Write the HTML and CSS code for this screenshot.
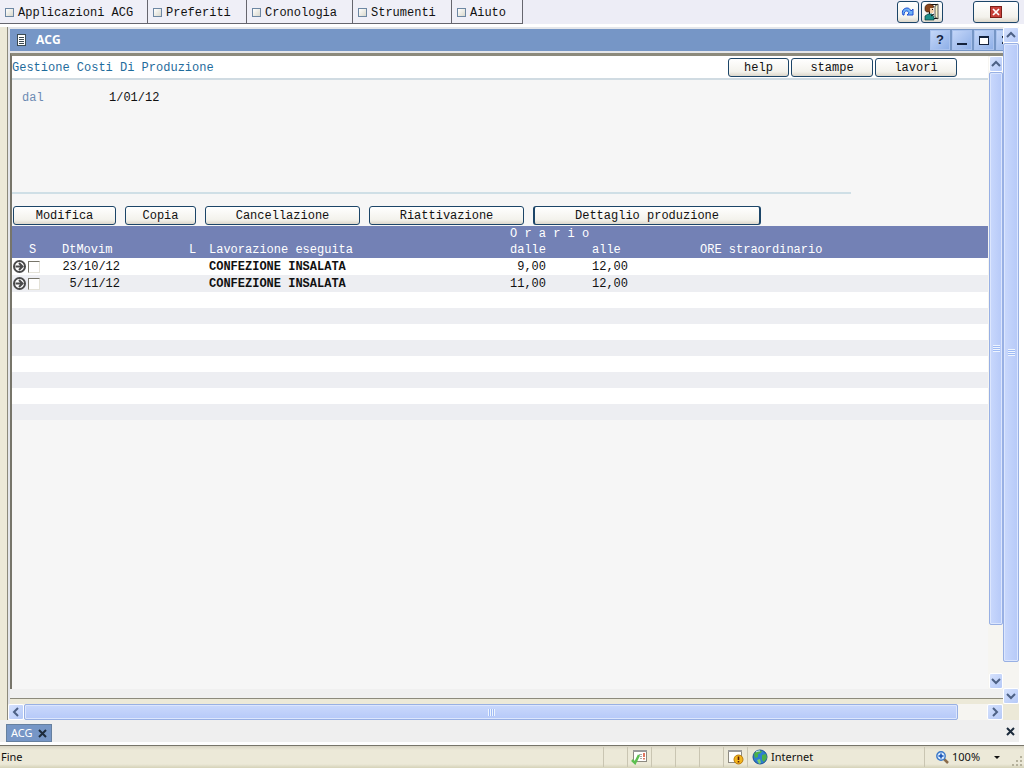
FILE: index.html
```html
<!DOCTYPE html>
<html lang="it">
<head>
    <meta charset="UTF-8">
    <meta name="viewport" content="width=device-width, initial-scale=1.0">
    <title>ACG - Gestione Costi Di Produzione</title>
    <link rel="stylesheet" href="styles.css">
</head>
<body>
    <!-- Menu bar -->
    <header class="menubar">
        <nav class="menu">
            <button type="button" class="menu-item menu-apps"><span class="menu-box"></span>Applicazioni ACG</button>
            <button type="button" class="menu-item menu-fav"><span class="menu-box"></span>Preferiti</button>
            <button type="button" class="menu-item menu-history"><span class="menu-box"></span>Cronologia</button>
            <button type="button" class="menu-item menu-tools"><span class="menu-box"></span>Strumenti</button>
            <button type="button" class="menu-item menu-help"><span class="menu-box"></span>Aiuto</button>
        </nav>
        <div class="menubar-actions">
            <button type="button" class="xp-button icon-button" aria-label="Aggiorna">
                <svg width="14" height="12" viewBox="0 0 14 12">
                    <path d="M2 9 C0 5 3 2 6 2 C8 2 9 3 10 5 L12 3 V9 H6 L8 7 C7 4 3 4 3 9 Z" fill="#6fb2f5" stroke="#1c4fd4"/>
                </svg>
            </button>
            <button type="button" class="xp-button icon-button" aria-label="Esci">
                <svg width="16" height="18" viewBox="0 0 16 18">
                    <rect x="5.5" y="1.5" width="8" height="14" fill="#fff" stroke="#111"/>
                    <path d="M11 3 L14 1 V16 L11 14 Z" fill="#f8f2cc" stroke="#111" stroke-width=".7"/>
                    <path d="M1 5 C1 0 9 0 10 4 L8 5 V9 H4 C1 9 1 7 1 5 Z" fill="#8a451b" stroke="#3b1c0a" stroke-width=".7"/>
                    <path d="M6 5 H9 L10 8 L9 10 H6 Z" fill="#f2cfa8"/>
                    <path d="M8 6 H9 V7 H8 Z" fill="#111"/>
                    <path d="M1 17 V13 L4 11 H8 L10 14 V17 Z" fill="#1d8f88" stroke="#0a3b3a" stroke-width=".7"/>
                    <path d="M7 13 L10 11" stroke="#111"/>
                </svg>
            </button>
            <button type="button" class="xp-button close-button" aria-label="Chiudi">
                <svg width="12" height="12" viewBox="0 0 12 12">
                    <rect x=".5" y=".5" width="11" height="11" fill="#c8413a" stroke="#7e2019"/>
                    <path d="M3 3 L9 9 M9 3 L3 9" stroke="#fff" stroke-width="1.7"/>
                </svg>
            </button>
        </div>
    </header>

    <!-- Desktop with the application window -->
    <div class="desktop">
        <div class="desktop-main">
            <main class="window">
                <div class="titlebar">
                    <svg class="title-icon" width="9" height="12" viewBox="0 0 9 12">
                        <rect x=".5" y=".5" width="8" height="11" fill="#fff" stroke="#3c4b52"/>
                        <path d="M2 3.5 H7 M2 5.5 H7 M2 7.5 H7 M2 9.5 H7" stroke="#3c4b52"/>
                    </svg>
                    <h1 class="title">ACG</h1>
                    <div class="title-buttons">
                        <button type="button" class="title-button">?</button>
                        <button type="button" class="title-button" aria-label="Riduci">
                            <svg width="12" height="12" viewBox="0 0 12 12"><path d="M1 10 H11" stroke="#14223c" stroke-width="2"/></svg>
                        </button>
                        <button type="button" class="title-button" aria-label="Ingrandisci">
                            <svg width="12" height="12" viewBox="0 0 12 12">
                                <rect x="1.5" y="2.5" width="9" height="8" fill="#fff" stroke="#14223c"/>
                                <path d="M1 3 H11" stroke="#14223c" stroke-width="2"/>
                            </svg>
                        </button>
                        <button type="button" class="title-button" aria-label="Chiudi finestra">
                            <svg width="8" height="8" viewBox="0 0 8 8"><path d="M0 0 L8 8 M8 0 L0 8" stroke="#14223c" stroke-width="2"/></svg>
                        </button>
                    </div>
                </div>

                <div class="frame">
                    <div class="page">
                        <div class="page-header">
                            <h2 class="page-title">Gestione Costi Di Produzione</h2>
                            <div class="page-links">
                                <button type="button" class="xp-button link-help">help</button>
                                <button type="button" class="xp-button link-wide">stampe</button>
                                <button type="button" class="xp-button link-wide">lavori</button>
                            </div>
                        </div>

                        <dl class="filter">
                            <dt>dal</dt>
                            <dd>1/01/12</dd>
                        </dl>

                        <div class="toolbar">
                            <button type="button" class="xp-button tool-edit">Modifica</button>
                            <button type="button" class="xp-button tool-copy">Copia</button>
                            <button type="button" class="xp-button tool-wide">Cancellazione</button>
                            <button type="button" class="xp-button tool-wide">Riattivazione</button>
                            <button type="button" class="xp-button tool-detail">Dettaglio produzione</button>
                        </div>

                        <table class="grid">
                            <colgroup>
                                <col class="col-select">
                                <col class="col-date">
                                <col class="col-l">
                                <col class="col-work">
                                <col class="col-from">
                                <col class="col-to">
                                <col>
                            </colgroup>
                            <thead>
                                <tr>
                                    <th colspan="4"></th>
                                    <th colspan="2">O r a r i o</th>
                                    <th></th>
                                </tr>
                                <tr>
                                    <th class="head-select">S</th>
                                    <th>DtMovim</th>
                                    <th>L</th>
                                    <th>Lavorazione eseguita</th>
                                    <th>dalle</th>
                                    <th>alle</th>
                                    <th>ORE straordinario</th>
                                </tr>
                            </thead>
                            <tbody>
                                <tr class="filled">
                                    <td>
                                        <div class="select-cell">
                                            <button type="button" class="row-go" aria-label="Apri riga 1">
                                                <svg width="13" height="13" viewBox="0 0 13 13">
                                                    <circle cx="6.5" cy="6.5" r="5.5" fill="#fff" stroke="#4a4a4a" stroke-width="2"/>
                                                    <path d="M2.5 6.5 H9.5 M6 3 L9.5 6.5 L6 10" fill="none" stroke="#4a4a4a" stroke-width="2"/>
                                                </svg>
                                            </button>
                                            <input type="checkbox" class="row-check" aria-label="Seleziona riga 1">
                                        </div>
                                    </td>
                                    <td><span class="date">23/10/12</span></td>
                                    <td></td>
                                    <td class="work">CONFEZIONE INSALATA</td>
                                    <td><span class="hour">9,00</span></td>
                                    <td><span class="hour">12,00</span></td>
                                    <td></td>
                                </tr>
                                <tr class="filled">
                                    <td>
                                        <div class="select-cell">
                                            <button type="button" class="row-go" aria-label="Apri riga 2">
                                                <svg width="13" height="13" viewBox="0 0 13 13">
                                                    <circle cx="6.5" cy="6.5" r="5.5" fill="#fff" stroke="#4a4a4a" stroke-width="2"/>
                                                    <path d="M2.5 6.5 H9.5 M6 3 L9.5 6.5 L6 10" fill="none" stroke="#4a4a4a" stroke-width="2"/>
                                                </svg>
                                            </button>
                                            <input type="checkbox" class="row-check" aria-label="Seleziona riga 2">
                                        </div>
                                    </td>
                                    <td><span class="date">5/11/12</span></td>
                                    <td></td>
                                    <td class="work">CONFEZIONE INSALATA</td>
                                    <td><span class="hour">11,00</span></td>
                                    <td><span class="hour">12,00</span></td>
                                    <td></td>
                                </tr>
                                <tr><td colspan="7"></td></tr>
                                <tr><td colspan="7"></td></tr>
                                <tr><td colspan="7"></td></tr>
                                <tr><td colspan="7"></td></tr>
                                <tr><td colspan="7"></td></tr>
                                <tr><td colspan="7"></td></tr>
                                <tr><td colspan="7"></td></tr>
                                <tr><td colspan="7"></td></tr>
                            </tbody>
                        </table>
                    </div>

                    <div class="scroll scroll-v scroll-inner">
                        <button type="button" class="scroll-arrow" aria-label="Su">
                            <svg width="10" height="8" viewBox="0 0 10 8"><path d="M1 6 L5 2 L9 6" fill="none" stroke="#4d6185" stroke-width="2"/></svg>
                        </button>
                        <div class="scroll-track">
                            <div class="scroll-thumb thumb-inner"><span class="grip"></span></div>
                        </div>
                        <button type="button" class="scroll-arrow" aria-label="Giù">
                            <svg width="10" height="8" viewBox="0 0 10 8"><path d="M1 2 L5 6 L9 2" fill="none" stroke="#4d6185" stroke-width="2"/></svg>
                        </button>
                    </div>
                </div>
                <div class="window-foot"></div>
            </main>

            <div class="scroll scroll-h">
                <button type="button" class="scroll-arrow" aria-label="Sinistra">
                    <svg width="8" height="10" viewBox="0 0 8 10"><path d="M6 1 L2 5 L6 9" fill="none" stroke="#4d6185" stroke-width="2"/></svg>
                </button>
                <div class="scroll-track">
                    <div class="scroll-thumb thumb-h"><span class="grip"></span></div>
                </div>
                <button type="button" class="scroll-arrow" aria-label="Destra">
                    <svg width="8" height="10" viewBox="0 0 8 10"><path d="M2 1 L6 5 L2 9" fill="none" stroke="#4d6185" stroke-width="2"/></svg>
                </button>
            </div>
        </div>

        <div class="scroll scroll-v scroll-outer">
            <button type="button" class="scroll-arrow" aria-label="Su">
                <svg width="10" height="8" viewBox="0 0 10 8"><path d="M1 6 L5 2 L9 6" fill="none" stroke="#4d6185" stroke-width="2"/></svg>
            </button>
            <div class="scroll-track">
                <div class="scroll-thumb thumb-outer"><span class="grip"></span></div>
            </div>
            <button type="button" class="scroll-arrow" aria-label="Giù">
                <svg width="10" height="8" viewBox="0 0 10 8"><path d="M1 2 L5 6 L9 2" fill="none" stroke="#4d6185" stroke-width="2"/></svg>
            </button>
        </div>
    </div>

    <!-- Open windows -->
    <div class="taskbar">
        <button type="button" class="task">ACG
            <svg width="9" height="9" viewBox="0 0 9 9"><path d="M1 1 L8 8 M8 1 L1 8" stroke="#1c2b3c" stroke-width="2"/></svg>
        </button>
        <button type="button" class="task-close" aria-label="Chiudi tutto">
            <svg width="9" height="9" viewBox="0 0 9 9"><path d="M1 1 L8 8 M8 1 L1 8" stroke="#1c2b3c" stroke-width="2"/></svg>
        </button>
    </div>

    <!-- Browser status bar -->
    <footer class="statusbar">
        <span class="status-text">Fine</span>
        <span class="status-cell"></span>
        <span class="status-cell">
            <svg width="17" height="16" viewBox="0 0 17 16">
                <rect x="2.5" y="1.5" width="13" height="11" fill="#fff" stroke="#8d8a80"/>
                <path d="M2 2 H16" stroke="#9a9a9a" stroke-width="2"/>
                <path d="M8 5.5 H11 M9 7.5 H11 M9 9.5 H11" stroke="#aaa"/>
                <path d="M13 4 V8 M13 9 V10.5" stroke="#d84a2c" stroke-width="1.5"/>
                <path d="M1 11 L4 14 L8 6" fill="none" stroke="#5cbf50" stroke-width="2.5"/>
            </svg>
        </span>
        <span class="status-cell"></span>
        <span class="status-cell"></span>
        <span class="status-cell"></span>
        <span class="status-cell">
            <svg width="17" height="16" viewBox="0 0 17 16">
                <rect x="1.5" y="1.5" width="13" height="12" fill="#fff" stroke="#8d8a80"/>
                <path d="M1 2 H15" stroke="#9a9a9a" stroke-width="2"/>
                <circle cx="11.5" cy="10.5" r="4.5" fill="#f2b51d" stroke="#b9780a"/>
                <path d="M11.5 7.5 V11 M11.5 12 V13.5" stroke="#5a1c0a" stroke-width="1.6"/>
            </svg>
        </span>
        <span class="status-zone">
            <svg width="16" height="16" viewBox="0 0 16 16">
                <circle cx="8" cy="8" r="7" fill="#2f7ed0" stroke="#1b4f94"/>
                <path d="M2 5 C4 1 8 1 10 2 L9 4 L6 5 L6 8 L3 9 Z" fill="#4bb04a"/>
                <path d="M10 6 L14 5 L15 9 L12 13 L10 11 Z" fill="#4bb04a"/>
                <path d="M5 11 L8 10 L9 14 L7 15 Z" fill="#7ccf6b"/>
                <path d="M4 3 C5 2 7 2 8 2" stroke="#cfeeff" fill="none"/>
            </svg>
            Internet
        </span>
        <button type="button" class="status-zoom">
            <svg width="13" height="13" viewBox="0 0 13 13">
                <path d="M8 8 L12 12" stroke="#8a6b4a" stroke-width="2.5"/>
                <circle cx="5" cy="5" r="4.2" fill="#d9ecff" stroke="#3a78c8" stroke-width="1.4"/>
                <path d="M5 2.5 V7.5 M2.5 5 H7.5" stroke="#1450b4" stroke-width="1.5"/>
            </svg>
            100%
            <span class="caret"></span>
        </button>
        <svg class="status-grip" width="12" height="12" viewBox="0 0 12 12" fill="#b5b19c">
            <path d="M8 0h2v2H8zM4 4h2v2H4zM8 4h2v2H8zM0 8h2v2H0zM4 8h2v2H4zM8 8h2v2H8z"/>
        </svg>
    </footer>
</body>
</html>
```
FILE: styles.css
```css
* {
    margin: 0;
    padding: 0;
    box-sizing: border-box;
}

body {
    display: flex;
    flex-direction: column;
    height: 100vh;
    overflow: hidden;
    background: #fff;
    color: #111;
    font-family: "Courier New", "Liberation Mono", monospace;
    font-size: 12px;
    line-height: 16px;
}

button {
    font: inherit;
    color: inherit;
    white-space: nowrap;
}

svg {
    display: block;
    flex: none;
}

/* Menu bar */
.menubar {
    display: flex;
    justify-content: space-between;
    flex: none;
    height: 24px;
    background: #ededf6;
}

.menu {
    display: flex;
}

.menu-item {
    display: flex;
    align-items: center;
    gap: 4px;
    padding: 2px 0 0 5px;
    background: #efeff7;
    border: 1px solid #66666e;
    border-width: 0 1px 1px 0;
}

.menu-apps { width: 148px; }
.menu-fav { width: 99px; }
.menu-history { width: 106px; }
.menu-tools { width: 99px; }
.menu-help { width: 71px; }

.menu-box {
    width: 9px;
    height: 9px;
    background: linear-gradient(135deg, #fff, #d8d8cc);
    border: 1px solid #6d87a3;
}

.menubar-actions {
    display: flex;
    gap: 2px;
    padding: 1px 5px 1px 0;
}

.xp-button {
    display: flex;
    align-items: center;
    justify-content: center;
    height: 19px;
    background: linear-gradient(#fff, #f3f2ec 75%, #dcd7cb);
    border: 1px solid #1c4568;
    border-radius: 3px;
}

.icon-button {
    width: 22px;
    height: 22px;
}

.close-button {
    width: 46px;
    height: 22px;
    margin-left: 28px;
}

/* Desktop */
.desktop {
    display: flex;
    flex: 1;
    min-height: 0;
    margin-top: 3px;
    padding-right: 5px;
    border-left: 7px solid #ece9d8;
}

.desktop-main {
    display: flex;
    flex-direction: column;
    flex: 1;
    min-width: 0;
    border-left: 1px solid #8c8a7c;
}

.window {
    display: flex;
    flex-direction: column;
    flex: 1;
    min-height: 0;
    padding-left: 2px;
    background: #e4e6ea;
    overflow: hidden;
}

.titlebar {
    display: flex;
    align-items: center;
    flex: none;
    height: 22px;
    margin: 2px 0;
    padding-left: 7px;
    background: #7696c6;
    overflow: hidden;
}

.title {
    flex: 1;
    padding-left: 10px;
    color: #fff;
    font-family: "Open Sans", sans-serif;
    font-size: 12px;
    font-weight: bold;
}

.title-buttons {
    display: flex;
    gap: 2px;
    width: 73px;
}

.title-button {
    display: flex;
    align-items: center;
    justify-content: center;
    flex: none;
    width: 20px;
    height: 20px;
    background: linear-gradient(135deg, #c4d6f8, #8fb0e8);
    border: 1px solid #a9c2ee;
    color: #14223c;
    font-family: "Liberation Sans", sans-serif;
    font-size: 13px;
    font-weight: bold;
}

.frame {
    display: flex;
    flex: 1;
    min-height: 0;
    border-top: 3px solid #8c8a7c;
    border-left: 2px solid #77756a;
    background: #f6f6f6;
}

.page {
    flex: 1;
    min-width: 0;
}

.page-header {
    display: flex;
    align-items: center;
    justify-content: space-between;
    height: 24px;
    padding-right: 31px;
    background: #fff;
    border-bottom: 2px solid #d0dbe2;
}

.page-title {
    padding-top: 2px;
    color: #1f6c9c;
    font-size: 12px;
    font-weight: normal;
}

.page-links {
    display: flex;
    gap: 2px;
}

.page-links .xp-button,
.toolbar .xp-button {
    padding-top: 1px;
}

.link-help { width: 61px; }
.link-wide { width: 82px; }

.filter {
    display: flex;
    width: 86%;
    height: 114px;
    padding: 10px 0 0 10px;
    border-bottom: 2px solid #cfdfe6;
}

.filter dt {
    width: 87px;
    color: #6d8bb3;
}

.toolbar {
    display: flex;
    gap: 9px;
    padding: 12px 0 1px 1px;
}

.tool-edit { width: 103px; }
.tool-copy { width: 71px; }
.tool-wide { width: 155px; }

.tool-detail {
    width: 228px;
    border-width: 1px 2px;
}

/* Grid */
.grid {
    width: 100%;
    table-layout: fixed;
    border-collapse: collapse;
}

.col-select { width: 50px; }
.col-date { width: 127px; }
.col-l { width: 20px; }
.col-work { width: 301px; }
.col-from { width: 82px; }
.col-to { width: 108px; }

.grid th,
.grid td {
    height: 16px;
    text-align: left;
    white-space: nowrap;
}

.grid thead {
    background: #7381b5;
    color: #fff;
}

.grid th {
    padding-top: 1px;
    font-weight: normal;
    line-height: 15px;
}

.grid .head-select {
    padding-left: 17px;
}

.grid tbody tr {
    background: #fff;
}

.grid tbody tr:nth-child(even) {
    background: #edeef2;
}

.grid .filled td {
    height: 17px;
}

.select-cell {
    display: flex;
    align-items: center;
    gap: 2px;
    padding-left: 1px;
}

.row-go {
    background: none;
    border: none;
}

.row-check {
    appearance: none;
    width: 12px;
    height: 12px;
    background: #fff;
    border: 1px solid #77756a;
    border-right-color: #e4e2d8;
    border-bottom-color: #e4e2d8;
}

.work {
    font-weight: bold;
}

.date,
.hour {
    display: inline-block;
    width: 58px;
    text-align: right;
}

.hour {
    width: 36px;
}

.window-foot {
    flex: none;
    height: 15px;
    background: #ece9d8;
    border-top: 9px solid #f0f0f0;
    box-shadow: inset 0 1px #8c8a7c;
}

/* Scrollbars */
.scroll {
    display: flex;
    flex: none;
    background: #f6f5f1;
}

.scroll-v {
    flex-direction: column;
    width: 16px;
}

.scroll-inner {
    width: 15px;
    padding-left: 1px;
}

.scroll-outer {
    box-sizing: content-box;
    border-bottom: 16px solid #ece9d8;
}

.scroll-h {
    height: 16px;
}

.scroll-arrow {
    display: flex;
    align-items: center;
    justify-content: center;
    flex: none;
    width: 100%;
    height: 16px;
    background: linear-gradient(135deg, #d6e2fd, #b5c9f7);
    border: 1px solid #fff;
    border-radius: 2px;
}

.scroll-h .scroll-arrow {
    width: 16px;
}

.scroll-track {
    display: flex;
    flex: 1;
    min-width: 0;
    min-height: 0;
}

.scroll-v .scroll-track {
    flex-direction: column;
}

.scroll-thumb {
    display: flex;
    align-items: center;
    justify-content: center;
    background: linear-gradient(90deg, #c9d8fc, #b6c9f8);
    border: 1px solid #98b0e4;
    border-radius: 2px;
    box-shadow: inset 0 0 0 1px #dce6fd;
}

.scroll-h .scroll-thumb {
    background: linear-gradient(#c9d8fc, #b6c9f8);
}

.thumb-inner { height: 92%; }
.thumb-outer { height: 96%; }
.thumb-h { width: 97%; }

.grip {
    width: 7px;
    height: 7px;
    background: repeating-linear-gradient(#eef4fe 0 1px, #9fbbf5 1px 2px);
}

.scroll-h .grip {
    background: repeating-linear-gradient(90deg, #eef4fe 0 1px, #9fbbf5 1px 2px);
}

/* Taskbar */
.taskbar {
    display: flex;
    align-items: center;
    justify-content: space-between;
    flex: none;
    height: 22px;
    padding: 0 4px 0 6px;
    background: #efefef;
    border-right: 5px solid #fff;
    font-family: "Noto Sans", sans-serif;
    font-size: 11px;
}

.task {
    display: flex;
    align-items: center;
    gap: 5px;
    align-self: flex-end;
    height: 18px;
    padding: 0 4px;
    background: #7696c6;
    border: 1px solid #66809f;
    color: #fff;
}

.task-close {
    background: none;
    border: none;
}

/* Status bar */
.statusbar {
    display: flex;
    align-items: center;
    flex: none;
    height: 23px;
    margin-top: 3px;
    background: linear-gradient(#d8d4c4, #ece9d8 4px 18px, #d5d2b8);
    border-top: 1px solid #77756a;
    font-family: "Noto Sans", sans-serif;
    font-size: 11px;
}

.status-text {
    flex: 1;
    padding-left: 1px;
}

.status-cell,
.status-zone,
.status-zoom {
    display: flex;
    align-items: center;
    height: 20px;
    border: 0 solid #c9c5b2;
    border-left-width: 1px;
}

.status-cell {
    justify-content: center;
    width: 24px;
}

.status-zone {
    gap: 3px;
    width: 177px;
    padding-left: 4px;
}

.status-zoom {
    gap: 3px;
    width: 88px;
    padding-left: 11px;
    background: none;
}

.caret {
    margin-left: 11px;
    border: 3px solid transparent;
    border-top-color: #111;
    border-bottom: 0;
}

.status-grip {
    align-self: flex-end;
}
```
